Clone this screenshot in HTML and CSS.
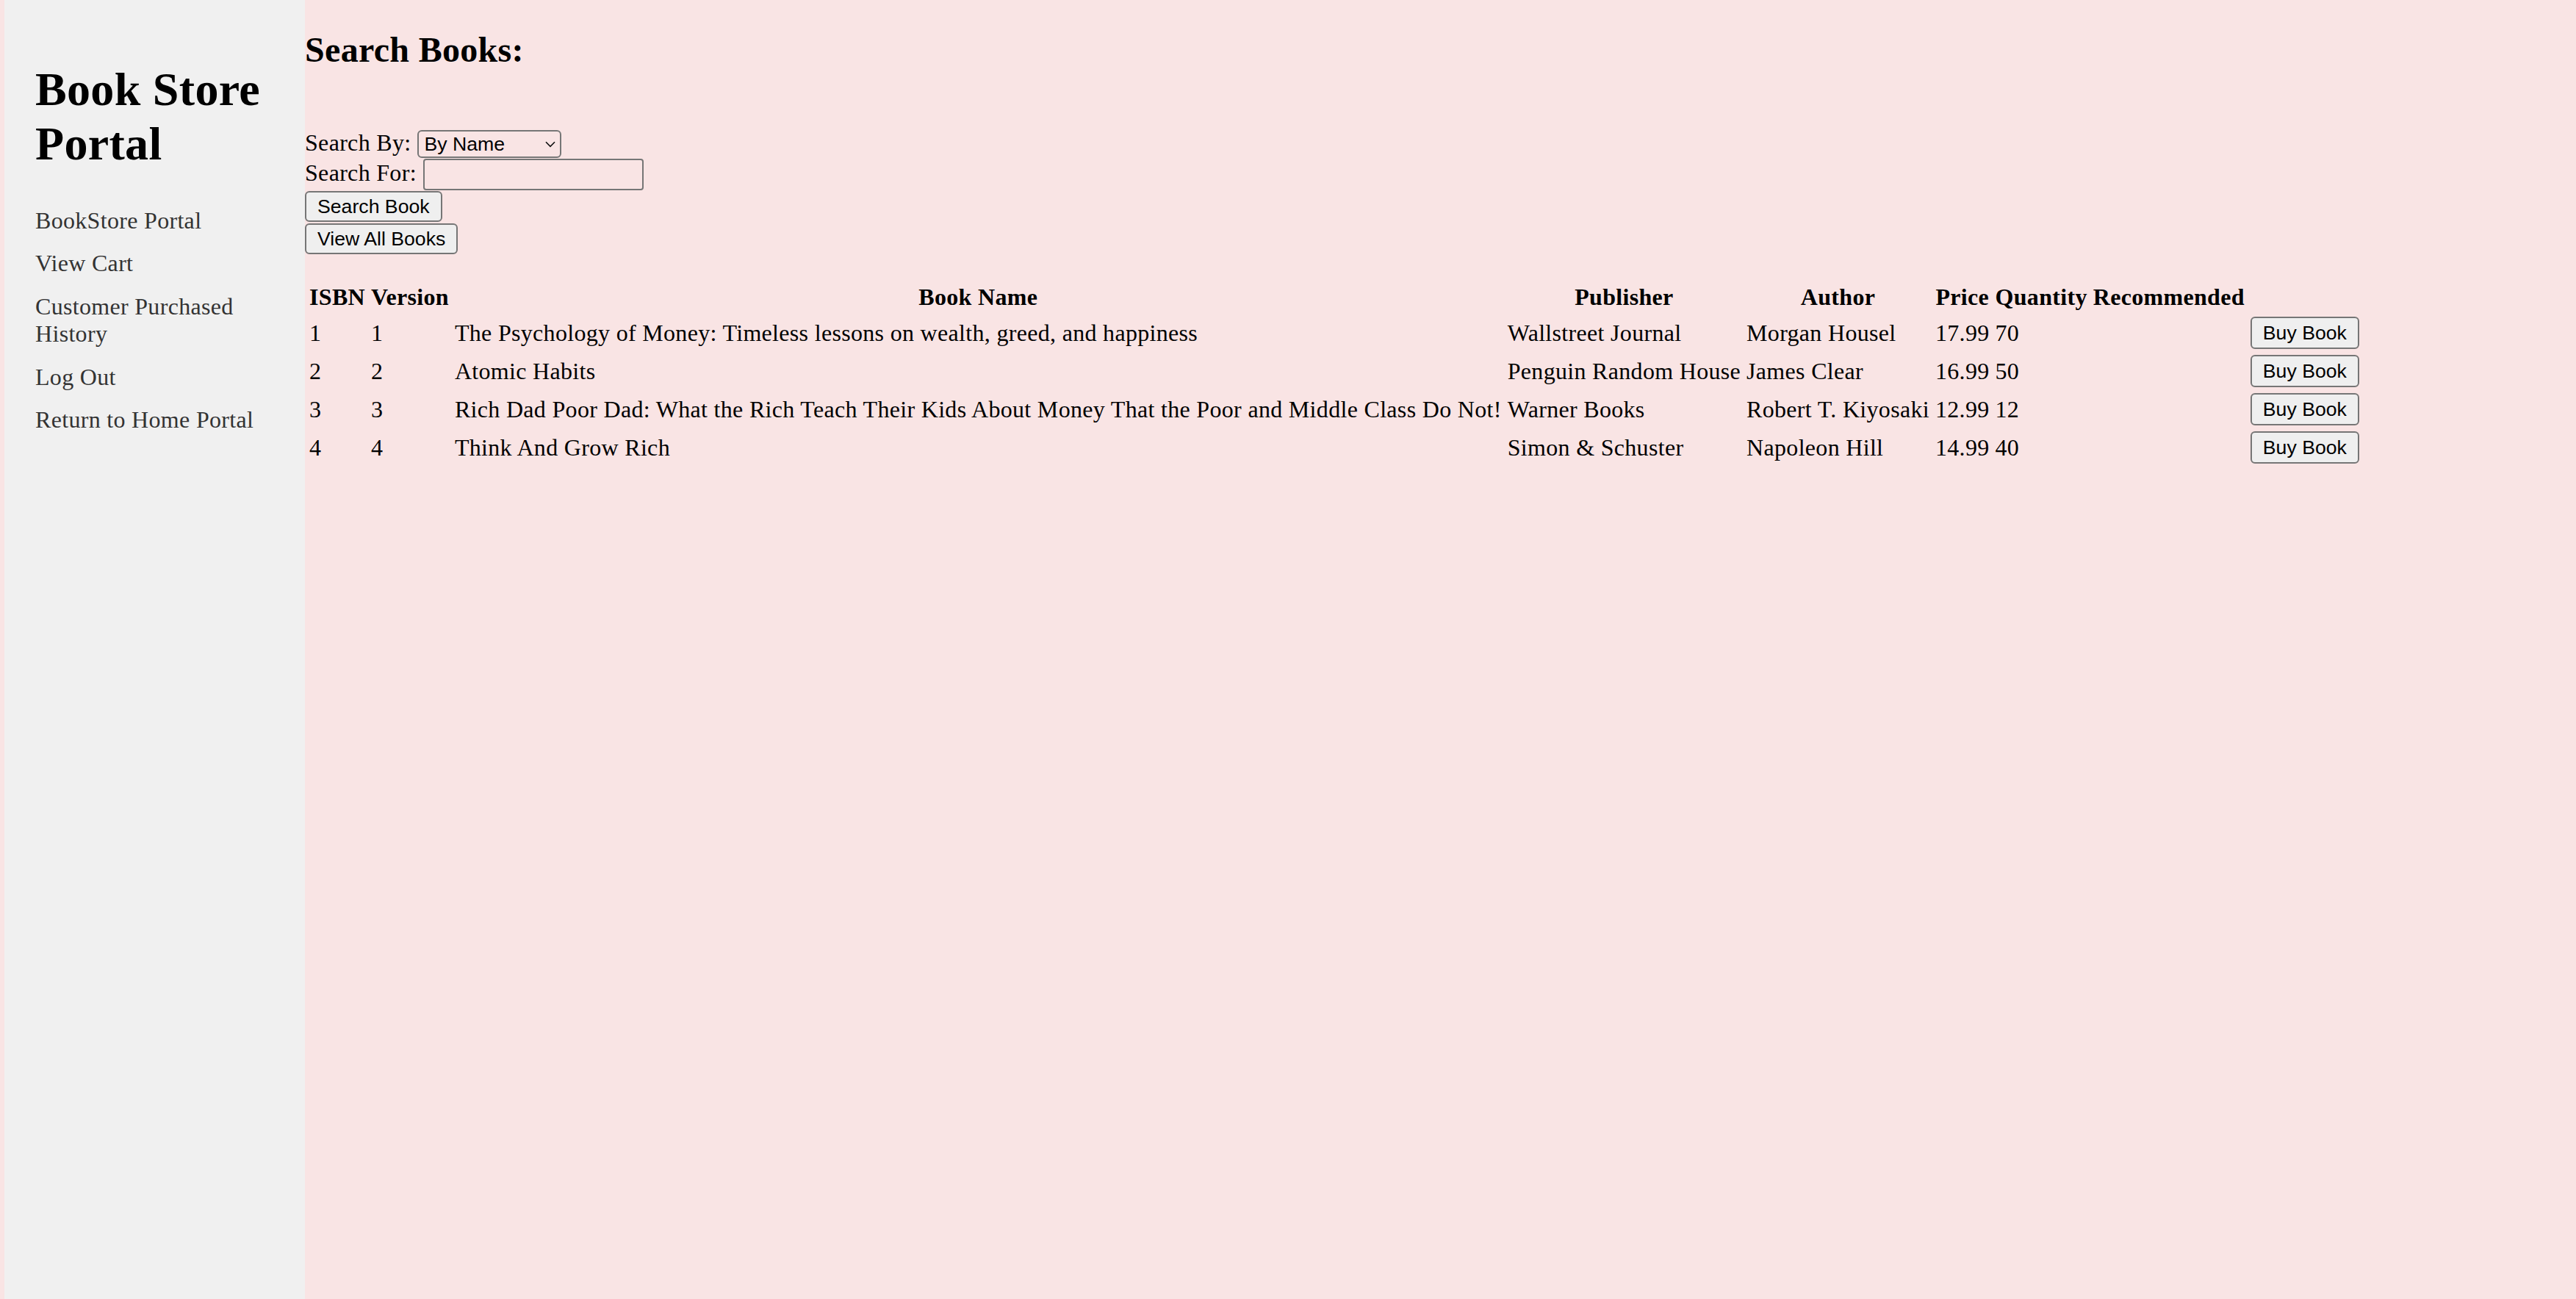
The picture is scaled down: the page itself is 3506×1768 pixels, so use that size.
FILE: index.html
```html
<!DOCTYPE html>
<html lang="en">
<head>
<meta charset="utf-8">
<title>Book Store Portal</title>
<link rel="stylesheet" href="styles.css">
</head>
<body>
<div class="page">
  <aside class="sidebar">
    <h1 class="brand">Book Store Portal</h1>
    <nav class="nav">
      <a href="#">BookStore Portal</a>
      <a href="#">View Cart</a>
      <a href="#">Customer Purchased History</a>
      <a href="#">Log Out</a>
      <a href="#">Return to Home Portal</a>
    </nav>
  </aside>
  <main class="main">
    <h2 class="title">Search Books:</h2>
    <div class="search">
      <div class="row">
        <span class="label">Search By:</span>
        <span class="select-wrap">
          <select class="select">
            <option>By Name</option>
            <option>By Author</option>
            <option>By ISBN</option>
          </select>
          <svg class="chev" width="14" height="9" viewBox="0 0 14 9"><path d="M1 1.2 L7 7.4 L13 1.2" fill="none" stroke="#111" stroke-width="1.6"/></svg>
        </span>
      </div>
      <div class="row row2">
        <span class="label">Search For:</span>
        <input class="text" type="text">
      </div>
      <div class="btn-line"><button class="btn">Search Book</button></div>
      <div class="btn-line"><button class="btn">View All Books</button></div>
    </div>
    <table class="books">
      <thead>
        <tr><th>ISBN</th><th>Version</th><th>Book Name</th><th>Publisher</th><th>Author</th><th>Price</th><th>Quantity</th><th>Recommended</th></tr>
      </thead>
      <tbody>
        <tr><td>1</td><td>1</td><td>The Psychology of Money: Timeless lessons on wealth, greed, and happiness</td><td>Wallstreet Journal</td><td>Morgan Housel</td><td>17.99</td><td>70</td><td></td><td><button class="btn buy">Buy Book</button></td></tr>
        <tr><td>2</td><td>2</td><td>Atomic Habits</td><td>Penguin Random House</td><td>James Clear</td><td>16.99</td><td>50</td><td></td><td><button class="btn buy">Buy Book</button></td></tr>
        <tr><td>3</td><td>3</td><td>Rich Dad Poor Dad: What the Rich Teach Their Kids About Money That the Poor and Middle Class Do Not!</td><td>Warner Books</td><td>Robert T. Kiyosaki</td><td>12.99</td><td>12</td><td></td><td><button class="btn buy">Buy Book</button></td></tr>
        <tr><td>4</td><td>4</td><td>Think And Grow Rich</td><td>Simon &amp; Schuster</td><td>Napoleon Hill</td><td>14.99</td><td>40</td><td></td><td><button class="btn buy">Buy Book</button></td></tr>
      </tbody>
    </table>
  </main>
</div>
</body>
</html>
```
FILE: styles.css
```css
html, body {
  margin: 0;
  padding: 0;
}

body {
  background: #f9e4e4;
  font-family: "Liberation Serif", "Times New Roman", serif;
  font-size: 32px;
  letter-spacing: 0.0098em;
  color: #000;
}

.page {
  display: flex;
  min-height: 1768px;
  padding-left: 6px;
}

.sidebar {
  flex: none;
  width: 409px;
  box-sizing: border-box;
  background: #f0f0f0;
  padding: 85px 26px 0 42px;
}

.brand {
  margin: 0 0 39px;
  font-size: 64px;
  line-height: 73.6px;
  font-weight: bold;
}

.nav a {
  display: block;
  padding: 10.5px 0;
  font-size: 32px;
  line-height: 37.5px;
  color: #333;
  text-decoration: none;
}

.main {
  flex: 1;
  min-width: 0;
}

.title {
  margin: 40px 0 0;
  font-size: 48px;
  line-height: 55px;
  font-weight: bold;
}

.search {
  margin-top: 81px;
}

.row {
  display: flex;
  align-items: baseline;
  column-gap: 9px;
}

.row2 {
  margin-top: 1px;
}

.label {
  line-height: 37px;
}

.select-wrap {
  position: relative;
  display: inline-flex;
}

.select {
  -webkit-appearance: none;
  appearance: none;
  width: 196px;
  height: 38px;
  box-sizing: border-box;
  margin: 0;
  padding: 0 7px;
  border: 2px solid #767676;
  border-radius: 6px;
  background: transparent;
  font-family: "Liberation Sans", Arial, sans-serif;
  font-size: 26.67px;
  letter-spacing: normal;
  color: #000;
}

.chev {
  position: absolute;
  right: 8px;
  top: 15px;
  pointer-events: none;
}

.text {
  width: 300px;
  height: 42.5px;
  box-sizing: border-box;
  margin: 0;
  padding: 4px 4px;
  border: 2px solid #767676;
  border-radius: 4px;
  background: transparent;
  font-family: "Liberation Sans", Arial, sans-serif;
  font-size: 26.67px;
  letter-spacing: normal;
}

.btn-line {
  margin-top: 1.3px;
}

.btn {
  margin: 0;
  padding: 4px 15px;
  border: 2px solid #767676;
  border-radius: 6px;
  background: #efefef;
  font-family: "Liberation Sans", Arial, sans-serif;
  font-size: 26.67px;
  line-height: 30.67px;
  letter-spacing: normal;
  color: #000;
}

.books {
  margin-top: 34px;
  border-collapse: separate;
  border-spacing: 4px;
  font-size: 32px;
}

.books th,
.books td {
  padding: 2px;
  line-height: 36.8px;
}

.books th {
  font-weight: bold;
  text-align: center;
}

.books td {
  text-align: left;
  white-space: nowrap;
}

.buy {
  height: 44px;
  padding-top: 0;
  padding-bottom: 0;
  vertical-align: middle;
}
```
